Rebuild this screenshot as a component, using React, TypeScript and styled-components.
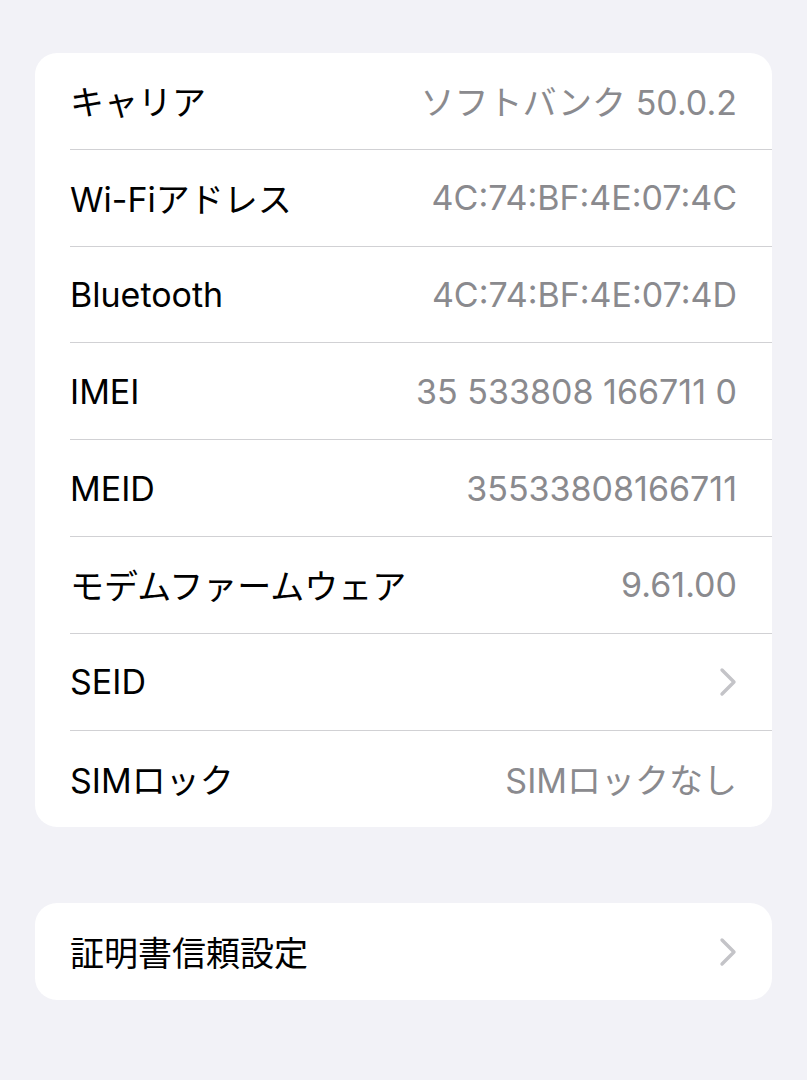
import React from 'react';
import styled, { createGlobalStyle } from 'styled-components';

interface Item {
    label: string;
    value?: string;
    chevron?: boolean;
}

const aboutItems: Item[] = [
    { label: 'キャリア', value: 'ソフトバンク 50.0.2' },
    { label: 'Wi-Fiアドレス', value: '4C:74:BF:4E:07:4C' },
    { label: 'Bluetooth', value: '4C:74:BF:4E:07:4D' },
    { label: 'IMEI', value: '35 533808 166711 0' },
    { label: 'MEID', value: '35533808166711' },
    { label: 'モデムファームウェア', value: '9.61.00' },
    { label: 'SEID', chevron: true },
    { label: 'SIMロック', value: 'SIMロックなし' },
];

const certItems: Item[] = [{ label: '証明書信頼設定', chevron: true }];

const Chevron = () => (
    <svg width="18" height="30" viewBox="0 0 18 30" fill="none">
        <path d="M3 3 L15 15 L3 27" stroke="#c4c4c8" strokeWidth="3.4" strokeLinecap="round" strokeLinejoin="round" />
    </svg>
);

const Group: React.FC<{ items: Item[] }> = ({ items }) => (
    <Card>
        {items.map((item, i) => (
            <Row key={item.label} last={i === items.length - 1}>
                <Label>{item.label}</Label>
                {item.value && <Value>{item.value}</Value>}
                {item.chevron && <Chevron />}
            </Row>
        ))}
    </Card>
);

const App: React.FC = () => (
    <>
        <GlobalStyle />
        <Page>
            <Group items={aboutItems} />
            <Group items={certItems} />
        </Page>
    </>
);

const GlobalStyle = createGlobalStyle`
  body {
    margin: 0;
    background: #f2f2f7;
    font-family: Inter, "Noto Sans CJK JP", sans-serif;
    -webkit-font-smoothing: antialiased;
  }
`;

const Page = styled.div`
  display: flex;
  flex-direction: column;
  gap: 76px;
  padding: 53px 35px 0 35px;
  min-height: 1080px;
  box-sizing: border-box;
`;

const Card = styled.div`
  background: #ffffff;
  border-radius: 22px;
  padding-left: 35px;
  overflow: hidden;
`;

const Row = styled.div<{ last: boolean }>`
  display: flex;
  align-items: center;
  justify-content: space-between;
  height: 96.8px;
  padding-right: 35px;
  box-sizing: border-box;
  border-bottom: ${(p) => (p.last ? 'none' : '1.5px solid #d1d1d4')};
`;

const Label = styled.span`
  font-size: 34px;
  color: #000000;
`;

const Value = styled.span`
  font-size: 34px;
  color: #8a8a8e;
`;

export default App;
